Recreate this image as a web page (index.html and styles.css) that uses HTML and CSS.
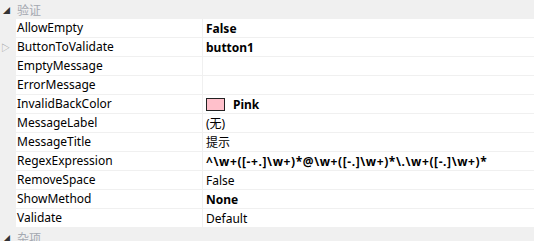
FILE: index.html
```html
<!DOCTYPE html>
<html lang="zh-CN">
<head>
    <meta charset="UTF-8">
    <title>属性</title>
    <link rel="stylesheet" href="styles.css">
</head>
<body>
    <div class="grid">
        <div class="category"><span class="toggle">&#9698;</span><span class="cat-name">验证</span></div>
        <div class="row"><span class="gutter"></span><span class="name">AllowEmpty</span><span class="value bold">False</span></div>
        <div class="row"><span class="gutter"><span class="expand">&#9655;</span></span><span class="name">ButtonToValidate</span><span class="value bold">button1</span></div>
        <div class="row"><span class="gutter"></span><span class="name">EmptyMessage</span><span class="value"></span></div>
        <div class="row"><span class="gutter"></span><span class="name">ErrorMessage</span><span class="value"></span></div>
        <div class="row"><span class="gutter"></span><span class="name">InvalidBackColor</span><span class="value bold"><span class="swatch"></span>Pink</span></div>
        <div class="row"><span class="gutter"></span><span class="name">MessageLabel</span><span class="value">(无)</span></div>
        <div class="row"><span class="gutter"></span><span class="name">MessageTitle</span><span class="value">提示</span></div>
        <div class="row"><span class="gutter"></span><span class="name">RegexExpression</span><span class="value bold regex">^\w+([-+.]\w+)*@\w+([-.]\w+)*\.\w+([-.]\w+)*</span></div>
        <div class="row"><span class="gutter"></span><span class="name">RemoveSpace</span><span class="value">False</span></div>
        <div class="row"><span class="gutter"></span><span class="name">ShowMethod</span><span class="value bold">None</span></div>
        <div class="row"><span class="gutter"></span><span class="name">Validate</span><span class="value">Default</span></div>
        <div class="category"><span class="toggle">&#9698;</span><span class="cat-name">杂项</span></div>
    </div>
</body>
</html>
```

FILE: styles.css
```css
body {
    margin: 0;
    padding: 0;
    background: #fff;
    font-family: "Noto Sans", "Noto Sans CJK SC", sans-serif;
    font-size: 12px;
    color: #000;
    overflow: hidden;
}
.grid {
    width: 534px;
}
.category {
    display: flex;
    align-items: center;
    height: 19px;
    background: #f0f0f0;
}
.toggle {
    width: 17px;
    font-size: 7px;
    color: #333;
    padding-left: 3px;
    box-sizing: border-box;
}
.cat-name {
    color: #a4a8b0;
}
.row {
    display: grid;
    grid-template-columns: 16px 187px 1fr;
    height: 18px;
    border-bottom: 1px solid #f0f0f0;
}
.gutter {
    background: #f0f0f0;
    display: flex;
    align-items: center;
}
.expand {
    font-size: 9px;
    color: #999;
    padding-left: 1px;
}
.name {
    padding-left: 1px;
    line-height: 18px;
    white-space: nowrap;
    border-right: 1px solid #f0f0f0;
}
.value {
    display: flex;
    align-items: center;
    padding-left: 3px;
    white-space: nowrap;
}
.bold {
    font-weight: bold;
}
.regex {
    letter-spacing: 0.6px;
}
.swatch {
    width: 19px;
    height: 13px;
    background: #ffc0cb;
    border: 1px solid #222;
    margin-right: 8px;
    box-sizing: border-box;
}
```
